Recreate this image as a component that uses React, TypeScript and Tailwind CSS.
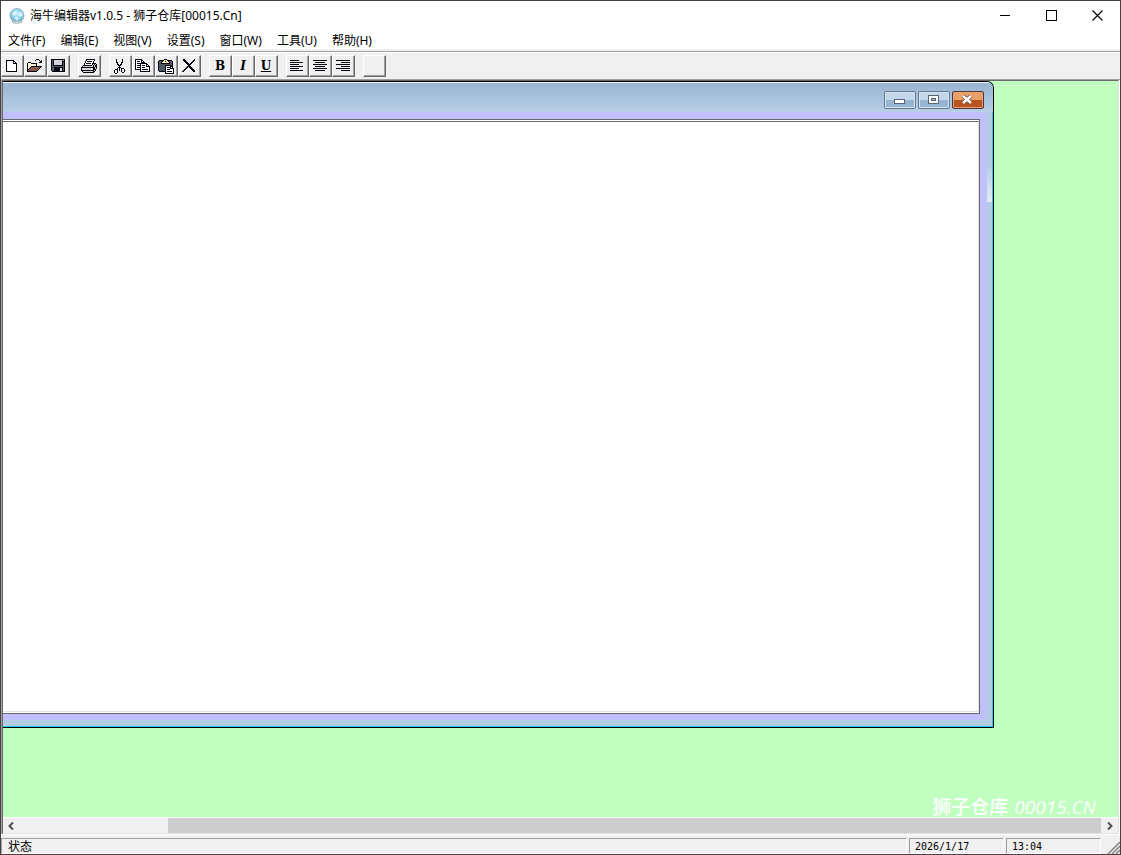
import type { ReactNode } from "react";

const palette: Record<string, string> = {
  K: "#05050f",
  W: "#ffffff",
  Y: "#ffe9a8",
  B: "#8a5a48",
  G: "#8f9298",
  S: "#4f5966",
  L: "#d5d5da",
};

const bitmaps: Record<string, string[]> = {
  new: [
    "................",
    "................",
    "..KKKKKKKK......",
    "..KWWWWWWKK.....",
    "..KWWWWWWKWK....",
    "..KWWWWWWKKKK...",
    "..KWWWWWWWWWK...",
    "..KWWWWWWWWWK...",
    "..KWWWWWWWWWK...",
    "..KWWWWWWWWWK...",
    "..KWWWWWWWWWK...",
    "..KWWWWWWWWWK...",
    "..KWWWWWWWWWK...",
    "..KKKKKKKKKKK...",
    "................",
    "................",
  ],
  open: [
    "................",
    ".........KKK....",
    "........K...K.K.",
    ".............KK.",
    ".KKK........KKK.",
    "KYWYKKKKKK......",
    "KWYWYWYWYK......",
    "KYWYWYWYWK......",
    "KWYWKKKKKKKKKKK.",
    "KYWKBBBBBBBBBK..",
    "KWKBBBBBBBBBK...",
    "KKBBBBBBBBBK....",
    "KBBBBBBBBBK.....",
    "KKKKKKKKKK......",
    "................",
    "................",
  ],
  save: [
    "................",
    ".KKKKKKKKKKKKKK.",
    ".KSKLLLLLLLLKLK.",
    ".KSKLLLLLLLLKKK.",
    ".KSKLLLLLLLLKSK.",
    ".KSKLLLLLLLLKSK.",
    ".KSKLLLLLLLLKSK.",
    ".KSKKKKKKKKKKSK.",
    ".KSSSSSSSSSSSSK.",
    ".KSSKKKKKKKKKSK.",
    ".KSSKKKKKKLLKSK.",
    ".KSSKKKKKKLLKSK.",
    ".KSSKKKKKKLLKSK.",
    "..KKKKKKKKKKKKK.",
    "................",
    "................",
  ],
  print: [
    "................",
    ".....KKKKKKKKK..",
    ".....KWWWWWWWK..",
    "....KWKKKKKWK...",
    "....KWWWWWWWK...",
    "...KWKKKKKWKKKK.",
    "...KWWWWWWWKLKLK",
    "..KKKKKKKKKLKLKK",
    ".KLLLLLLLLLLKLKK",
    "KKKKKKKKKKKKKKLK",
    "KLLLLLLLLYYLKKLK",
    "KLLLLLLLLLLLKKK.",
    "KKKKKKKKKKKKKLK.",
    ".KLLLLLLLLLLKK..",
    "..KKKKKKKKKKK...",
    "................",
  ],
  cut: [
    "................",
    "....K.....K.....",
    "....K.....K.....",
    "....K.....K.....",
    "....KK...KK.....",
    ".....K...K......",
    ".....KK.KK......",
    "......KKK.......",
    ".......K........",
    "......KKK.......",
    ".....K.K.KKK....",
    "...KKK.K.K..K...",
    "..K..K.K.K..K...",
    "..K..K...K..K...",
    "..K..K....KK....",
    "...KK...........",
  ],
  copy: [
    "................",
    "KKKKKKK.........",
    "KWWWWWKK........",
    "KWKKKWKWK.......",
    "KWWWWWKKKK......",
    "KWKKKKKKKKKK....",
    "KWWWWKWWWWWKK...",
    "KWKKKKWKKKWKWK..",
    "KWWWWKWWWWWKKKK.",
    "KWKKKKWKKKWWWWK.",
    "KWWWWKWWWWWWWWK.",
    "KKKKKKWKKKKKKWK.",
    ".....KWWWWWWWWK.",
    ".....KKKKKKKKKK.",
    "................",
    "................",
  ],
  paste: [
    "................",
    "......KKK.......",
    ".KKKKKYYYKKKKK..",
    "KSSSKYYKYYKSSSK.",
    "KSSKYYYYYYYKSSK.",
    "KSSKKKKKKKKKSSK.",
    "KSSSSSSSSSSSSSK.",
    "KSSSSSSKKKKKKSK.",
    "KSSSSSSKWWWWKKK.",
    "KSSSSSSKWKKKKWK.",
    "KSSSSSSKWWWWKKKK",
    "KSSSSSSKWKKKWWWK",
    "KSSSSSSKWWWWWWWK",
    ".KKKKKKKWKKKKKWK",
    ".......KWWWWWWWK",
    ".......KKKKKKKKK",
  ],
  remove: [
    "................",
    "..KK.........K..",
    "..KKK.......KK..",
    "...KKK.....KK...",
    "....KKK...KK....",
    ".....KKK.KK.....",
    "......KKKK......",
    ".......KK.......",
    "......KKKK......",
    ".....KK.KKK.....",
    "....KK...KKK....",
    "...KK.....KKK...",
    "..KK.......KKK..",
    ".KK.........KK..",
    "................",
    "................",
  ],
  left: [
    "................",
    "................",
    ".KKKKKKKKK......",
    "................",
    ".KKKKKKKKKKKKK..",
    "................",
    ".KKKKKKKKK......",
    "................",
    ".KKKKKKKKKKKKK..",
    "................",
    ".KKKKKKKKK......",
    "................",
    ".KKKKKKKKKKKKK..",
    "................",
    "................",
    "................",
  ],
  center: [
    "................",
    "................",
    ".KKKKKKKKKKKKKK.",
    "................",
    "...KKKKKKKKKK...",
    "................",
    ".KKKKKKKKKKKKKK.",
    "................",
    "...KKKKKKKKKK...",
    "................",
    ".KKKKKKKKKKKKKK.",
    "................",
    "...KKKKKKKKKK...",
    "................",
    "................",
    "................",
  ],
  right: [
    "................",
    "................",
    ".KKKKKKKKKKKKKK.",
    "................",
    "......KKKKKKKKK.",
    "................",
    ".KKKKKKKKKKKKKK.",
    "................",
    "......KKKKKKKKK.",
    "................",
    ".KKKKKKKKKKKKKK.",
    "................",
    "......KKKKKKKKK.",
    "................",
    "................",
    "................",
  ],
};

function PixelIcon({ name }: { name: string }) {
  return (
    <svg width="16" height="16" viewBox="0 0 16 16" shapeRendering="crispEdges" aria-hidden="true">
      {bitmaps[name].flatMap((row, y) =>
        row.split("").map((c, x) =>
          c === "." ? null : <rect key={`${x}-${y}`} x={x} y={y} width="1" height="1" fill={palette[c]} />
        )
      )}
    </svg>
  );
}

const letter = "text-[12px] leading-4 font-bold font-['DejaVu_Serif',serif]";

const toolGroups: { label: string; content: ReactNode }[][] = [
  [
    { label: "新建", content: <PixelIcon name="new" /> },
    { label: "打开", content: <PixelIcon name="open" /> },
    { label: "保存", content: <PixelIcon name="save" /> },
  ],
  [{ label: "打印", content: <PixelIcon name="print" /> }],
  [
    { label: "剪切", content: <PixelIcon name="cut" /> },
    { label: "复制", content: <PixelIcon name="copy" /> },
    { label: "粘贴", content: <PixelIcon name="paste" /> },
    { label: "删除", content: <PixelIcon name="remove" /> },
  ],
  [
    { label: "粗体", content: <span className={letter}>B</span> },
    { label: "斜体", content: <span className={`${letter} italic`}>I</span> },
    { label: "下划线", content: <span className={`${letter} underline`}>U</span> },
  ],
  [
    { label: "左对齐", content: <PixelIcon name="left" /> },
    { label: "居中", content: <PixelIcon name="center" /> },
    { label: "右对齐", content: <PixelIcon name="right" /> },
  ],
  [{ label: "空白", content: null }],
];

const menus = ["文件(F)", "编辑(E)", "视图(V)", "设置(S)", "窗口(W)", "工具(U)", "帮助(H)"];

function AppIcon() {
  return (
    <svg width="16" height="16" viewBox="0 0 16 16" aria-hidden="true">
      <defs>
        <radialGradient id="globe" cx="50%" cy="35%" r="65%">
          <stop offset="0" stopColor="#c4effb" />
          <stop offset="0.6" stopColor="#86cdea" />
          <stop offset="1" stopColor="#6f9fbd" />
        </radialGradient>
      </defs>
      <ellipse cx="8" cy="13.5" rx="5" ry="2" fill="#8d9aa5" />
      <circle cx="8" cy="7.5" r="7" fill="url(#globe)" stroke="#8fa9b8" strokeWidth="0.8" />
      <path d="M3 5.5 6 3l2.5 1L7 6.5 4.5 8zM9.5 5l3-1 1.5 3-2.5 2-2-1.5zM5 10l3-1.5 2 2-1.5 2.5z" fill="#e9fbff" opacity="0.75" />
      <path d="M4 13.5c2 1 6 1 8 0" stroke="#eef3f6" fill="none" />
    </svg>
  );
}

function WindowControls() {
  const button = "flex h-full w-[46px] items-center justify-center";
  return (
    <div className="flex h-[29px] text-black">
      <button className={button} aria-label="最小化">
        <svg width="10" height="11" shapeRendering="crispEdges">
          <path d="M0 5.5h10" stroke="currentColor" />
        </svg>
      </button>
      <button className={button} aria-label="最大化">
        <svg width="11" height="11" shapeRendering="crispEdges">
          <path d="M.5.5h10v10H.5z" stroke="currentColor" fill="none" />
        </svg>
      </button>
      <button className={button} aria-label="关闭">
        <svg width="11" height="11">
          <path d="M.5.5l10 10M10.5.5l-10 10" stroke="currentColor" strokeWidth="1.1" />
        </svg>
      </button>
    </div>
  );
}

function ChildControls() {
  const base = "flex h-[18px] w-8 items-center justify-center rounded-[2px] border";
  const blue = "border-[#66788f] bg-linear-to-b from-[#c3d7ea] from-50% to-[#97b5d3] to-50% inset-ring inset-ring-[#d6e4f1]";
  return (
    <div className="flex gap-0.5">
      <button className={`${base} ${blue}`} aria-label="最小化文档">
        <svg width="12" height="12" shapeRendering="crispEdges">
          <path d="M.5 5.5h10v4H.5z" fill="#fff" stroke="#5a6472" />
        </svg>
      </button>
      <button className={`${base} ${blue}`} aria-label="还原文档">
        <svg width="12" height="12" shapeRendering="crispEdges">
          <path d="M.5 1.5h10v8H.5z" fill="#fff" stroke="#5a6472" />
          <path d="M3.5 4.5h4v2h-4z" fill="#9db8d4" stroke="#5a6472" />
        </svg>
      </button>
      <button
        className={`${base} border-[#54363a] bg-linear-to-b from-[#e9a067] from-50% to-[#b9541f] to-50% inset-ring inset-ring-[#e2a273]`}
        aria-label="关闭文档"
      >
        <svg width="12" height="12" viewBox="0 0 12 12">
          <path d="M1 2l8 7M9 2l-8 7" stroke="#6a5250" strokeWidth="4" />
          <path d="M1 2l8 7M9 2l-8 7" stroke="#fff" strokeWidth="2.4" />
        </svg>
      </button>
    </div>
  );
}

function ChildWindow() {
  return (
    <section className="flex h-[647px] w-[991px] flex-col overflow-hidden rounded-tr-[7px] border-t border-r border-b border-black bg-[#b4cde6]">
      <header className="flex h-[30px] shrink-0 justify-end border-t border-[#eef4fa] bg-linear-to-b from-[#9ab4d2] to-[#b7d0e8] pt-2 pr-[9px]">
        <ChildControls />
      </header>
      <div className="flex min-h-0 flex-1 border-r border-b border-[#27cdf0] pb-[6px]">
        <div className="flex-1 bg-[#c0c0ff] pt-[7px] pr-[6px] pb-[6px]">
          <div className="h-full border-t border-r border-b border-[#696969] bg-white pt-px pb-px">
            <textarea
              aria-label="文档内容"
              className="block h-full w-full resize-none border-t border-r border-b border-t-[#696969] border-r-[#e3e3e3] border-b-[#e3e3e3] bg-white outline-none"
            />
          </div>
        </div>
        <div className="w-[6px] pt-[53px] pl-px">
          <div className="h-[37px] bg-linear-to-b from-[#b4cde6] to-[#e4edf3]" />
        </div>
      </div>
    </section>
  );
}

function Chevron({ d }: { d: string }) {
  return (
    <svg width="7" height="8" viewBox="0 0 7 8" aria-hidden="true">
      <path d={d} stroke="#505050" strokeWidth="2" fill="none" />
    </svg>
  );
}

function ScrollBar() {
  return (
    <div className="flex h-4 shrink-0 border-t border-white bg-[#f0f0f0]">
      <button className="flex w-[17px] items-center justify-center" aria-label="向左滚动">
        <Chevron d="M5 .5 1.5 4 5 7.5" />
      </button>
      <div className="flex flex-1">
        <div className="ml-auto w-[86.3%] bg-[#cdcdcd]" />
      </div>
      <button className="flex w-[17px] items-center justify-center" aria-label="向右滚动">
        <Chevron d="M2 .5 5.5 4 2 7.5" />
      </button>
    </div>
  );
}

export default function App() {
  const cell = "border border-t-[#a0a0a0] border-l-[#a0a0a0] border-r-white border-b-white";
  return (
    <div className="flex h-screen flex-col border border-[#4a3f46] bg-[#f0f0f0] font-['Noto_Sans','Noto_Sans_CJK_SC',sans-serif] text-xs text-black">
      <header className="flex h-[31px] shrink-0 justify-between bg-white">
        <div className="flex h-[29px] items-center gap-[5px] pl-2">
          <AppIcon />
          <h1 className="leading-5">海牛编辑器v1.0.5 - 狮子仓库[00015.Cn]</h1>
        </div>
        <WindowControls />
      </header>

      <nav className="flex h-[17px] shrink-0 items-center gap-px bg-white">
        {menus.map((menu) => (
          <button key={menu} className="px-[7px] leading-4 whitespace-nowrap">
            {menu}
          </button>
        ))}
      </nav>

      <div className="shrink-0 border-b border-[#a0a0a0] pt-0.5">
        <div className="flex gap-2 border-t border-[#a0a0a0] py-0.5 inset-shadow-[0_1px_0_#fff]">
          {toolGroups.map((group, i) => (
            <div key={i} className="flex pt-px">
              {group.map((tool) => (
                <button
                  key={tool.label}
                  title={tool.label}
                  aria-label={tool.label}
                  className="flex h-[22px] w-[23px] items-center justify-center border border-t-white border-r-[#696969] border-b-[#696969] border-l-white pr-px inset-shadow-[-1px_-1px_0_#a0a0a0]"
                >
                  {tool.content}
                </button>
              ))}
            </div>
          ))}
        </div>
      </div>

      <main className="flex min-h-0 flex-1 flex-col border-r border-l border-r-white border-l-[#a0a0a0]">
        <div className="flex min-h-0 flex-1 flex-col border border-t-[#696969] border-r-[#e3e3e3] border-b-[#e3e3e3] border-l-[#696969]">
          <div className="relative min-h-0 flex-1 bg-[#c0ffc0]">
            <div className="h-full overflow-hidden">
              <ChildWindow />
            </div>
            <p className="absolute right-[22px] bottom-0 flex items-center gap-[6px] leading-5 font-medium whitespace-nowrap text-white">
              <span className="text-[19px]">狮子仓库</span>
              <span className="font-['Open_Sans',sans-serif] text-[19px] italic">00015.CN</span>
            </p>
          </div>
          <ScrollBar />
        </div>
      </main>

      <footer className="flex h-5 shrink-0 gap-0.5 border-t border-white pt-[3px] leading-4">
        <div className={`${cell} flex-1 pl-[6px]`}>状态</div>
        <div className={`${cell} w-[95px] pl-[5px] font-['DejaVu_Sans_Mono',monospace] text-[10px]`}>2026/1/17</div>
        <div className={`${cell} w-[95px] pl-[5px] font-['DejaVu_Sans_Mono',monospace] text-[10px]`}>13:04</div>
        <div className="flex w-[17px] items-end justify-end">
          <svg width="13" height="13" aria-hidden="true">
            <path d="M1 13 13 1M5 13l8-8M9 13l4-4" stroke="#8a8a8a" strokeWidth="1.6" />
          </svg>
        </div>
      </footer>
    </div>
  );
}
